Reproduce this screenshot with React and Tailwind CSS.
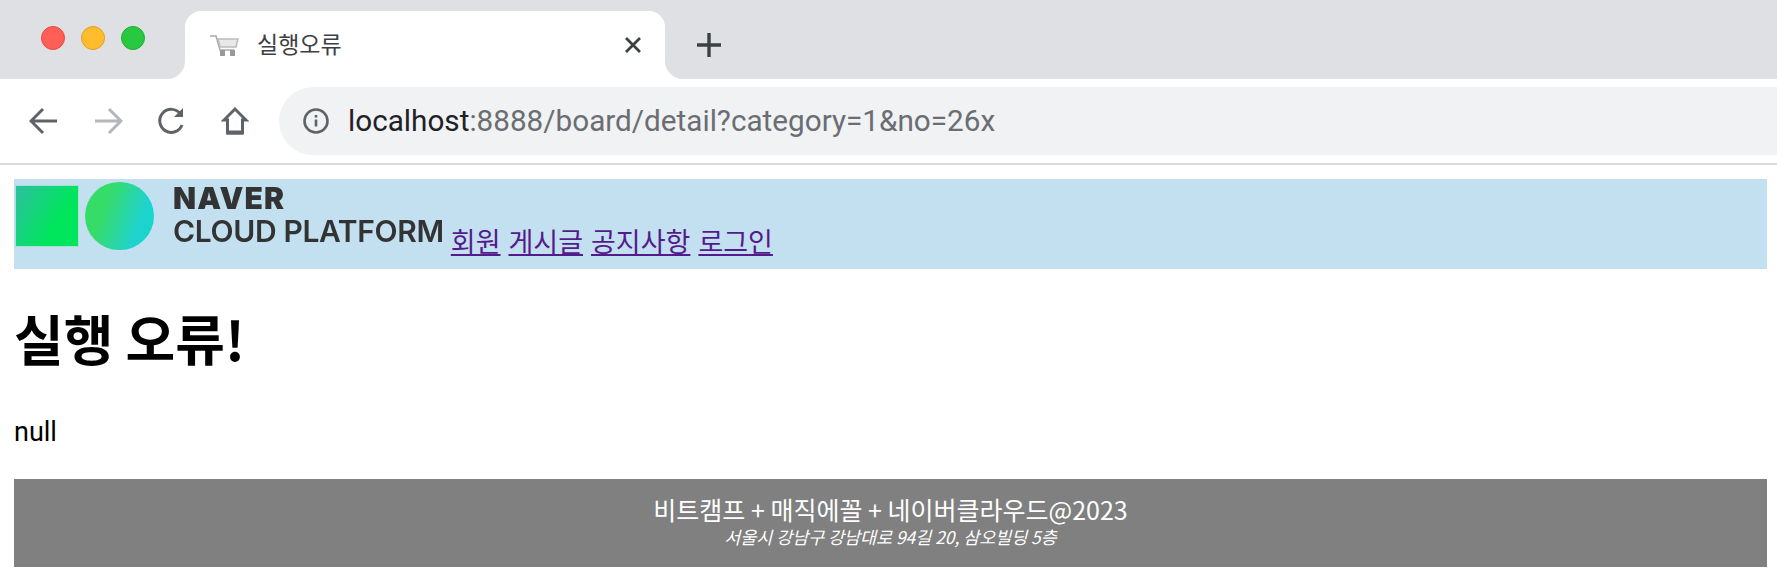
import React from "react";

const sans = 'font-["Roboto","Noto_Sans_CJK_KR",sans-serif]';

function Cart() {
  return (
    <svg width="30" height="24" viewBox="0 0 30 24" fill="none" className="shrink-0 blur-[0.5px]">
      <path d="M0 3h6l4 14h14" stroke="#aaa" strokeWidth="1.5" />
      <path d="M8 6h20l-2 8H10z" fill="#e8e8e8" stroke="#bbb" strokeWidth="1.5" />
      <rect x="10" y="17" width="5" height="6" fill="#999" />
      <rect x="20" y="17" width="5" height="6" fill="#999" />
    </svg>
  );
}

function Dot({ color, border }) {
  return <span className={`w-6 h-6 rounded-full border ${color} ${border}`} />;
}

function Arrow({ flip, color }) {
  return (
    <svg width="30" height="28" viewBox="0 0 30 28" fill="none" stroke={color} strokeWidth="3" className={flip ? "-scale-x-100" : ""}>
      <path d="M2 14h26M14 2L2 14l12 12" />
    </svg>
  );
}

function TabStrip() {
  return (
    <div className="flex h-[79px] bg-[linear-gradient(#dfe0e4_50%,#fff_50%)]">
      <div className="relative w-[185px] h-full bg-[#dfe0e4] rounded-br-[18px] flex items-start gap-4 pl-[41px] pt-[26px] rounded-tl-[10px]">
        <Dot color="bg-[#ff5f57]" border="border-[#e5483f]" />
        <Dot color="bg-[#ffbd2e]" border="border-[#e0a020]" />
        <Dot color="bg-[#28c840]" border="border-[#1fae34]" />
      </div>
      <div className="w-[480px] mt-[11px] bg-white rounded-t-[16px] flex items-center pl-[25px] pr-[22px]">
        <Cart />
        <span className={`ml-[17px] text-[23px] leading-none text-[#3c4043] ${sans}`}>실행오류</span>
        <svg width="20" height="20" viewBox="0 0 20 20" stroke="#3c4043" strokeWidth="2.800" className="ml-auto">
          <path d="M3 3l14 14M17 3L3 17" />
        </svg>
      </div>
      <div className="flex-1 h-full bg-[#dfe0e4] rounded-bl-[18px] pl-[31px] pt-[32px]">
        <svg width="26" height="26" viewBox="0 0 26 26" stroke="#3c4043" strokeWidth="3.4">
          <path d="M13 1v24M1 13h24" />
        </svg>
      </div>
    </div>
  );
}

function Toolbar() {
  return (
    <div className="h-[86px] bg-white flex border-b-2 border-[#d9d9d9] pt-[8px] pb-[8px] items-stretch">
      <div className="w-[279px] shrink-0 flex items-center pl-[29px]">
        <Arrow color="#5f6368" />
        <span className="w-[34px]" />
        <Arrow flip color="#b4b6b9" />
        <svg width="30" height="30" viewBox="0 0 30 30" fill="none" stroke="#5f6368" strokeWidth="3" className="ml-[34px]">
          <path d="M25 19a11.5 11.5 0 1 1-1.5-11" />
          <path d="M26 2v9h-9z" fill="#5f6368" stroke="none" />
        </svg>
        <svg width="28" height="30" viewBox="0 0 28 30" fill="none" stroke="#5f6368" strokeWidth="3" className="ml-[34px]">
          <path d="M14 3L3 14h3.500v13h15V14H25z" strokeLinejoin="miter" />
          <path d="M6 26.500h16" strokeWidth="4" />
        </svg>
      </div>
      <div className="flex-1 bg-[#f1f2f4] rounded-l-[34px] flex items-center pl-[24px]">
        <svg width="26" height="26" viewBox="0 0 26 26" fill="none" stroke="#5f6368" strokeWidth="2.600">
          <circle cx="13" cy="13" r="11.500" />
          <path d="M13 11.500v7M13 7v2.500" />
        </svg>
        <span className={`ml-[19px] text-[29.700px] leading-none text-[#6a6d71] ${sans}`}>
          <span className="text-[#202124]">localhost</span>:8888/board/detail?category=1&amp;no=26x
        </span>
      </div>
    </div>
  );
}

function Logo() {
  return (
    <div className="flex items-center h-[72px] pl-px shrink-0">
      <div className="w-[64px] h-[62px] border border-[#a8e0d8] bg-[linear-gradient(120deg,#2cbfa0,#00e65c_65%)] blur-[0.4px]" />
      <div className="w-[69px] h-[68px] ml-[6px] rounded-full bg-[linear-gradient(110deg,#36dc68_30%,#1fd2d0_75%,#10dcc0)] blur-[0.4px]" />
      <div className="ml-[19px] font-['Inter',sans-serif] text-[#333333] flex flex-col gap-[5px] mt-[-3px] blur-[0.3px]">
        <span className="text-[30px] leading-[28px] font-black tracking-[1.1px]">NAVER</span>
        <span className="text-[30px] leading-[28px] font-semibold tracking-[-0.36px] whitespace-nowrap">CLOUD PLATFORM</span>
      </div>
    </div>
  );
}

const links = ["회원", "게시글", "공지사항", "로그인"];

export default function App() {
  return (
    <div className={`min-h-[573px] bg-white overflow-hidden ${sans}`}>
      <div className="bg-[#2a1050]">
        <TabStrip />
      </div>
      <Toolbar />
      <div className="pl-[14px] pr-[10px] pt-[14px] text-black font-['Noto_Sans_CJK_KR',sans-serif]">
        <header className="h-[90px] bg-[#c3e0f1] flex items-start pt-[1px]">
          <Logo />
          <nav className="ml-[7px] mt-[41px] flex gap-[8px] text-[27px] leading-[40px] text-[#551a8b]">
            {links.map((l) => (
              <a key={l} href="#x" className="underline">{l}</a>
            ))}
          </nav>
        </header>
        <h1 className="mt-[33px] text-[54px] leading-[72px] font-bold">실행 오류!</h1>
        <p className="mt-[38px] text-[27px] leading-[40px] font-['Roboto',sans-serif]">null</p>
        <footer className="mt-[27px] h-[88px] bg-[#808080] text-white flex flex-col items-center justify-center pb-[7px]">
          <div className="text-[25px] leading-[34px]">비트캠프 + 매직에꼴 + 네이버클라우드@2023</div>
          <div className="text-[17.400px] leading-[22px] italic">서울시 강남구 강남대로 94길 20, 삼오빌딩 5층</div>
        </footer>
      </div>
    </div>
  );
}
